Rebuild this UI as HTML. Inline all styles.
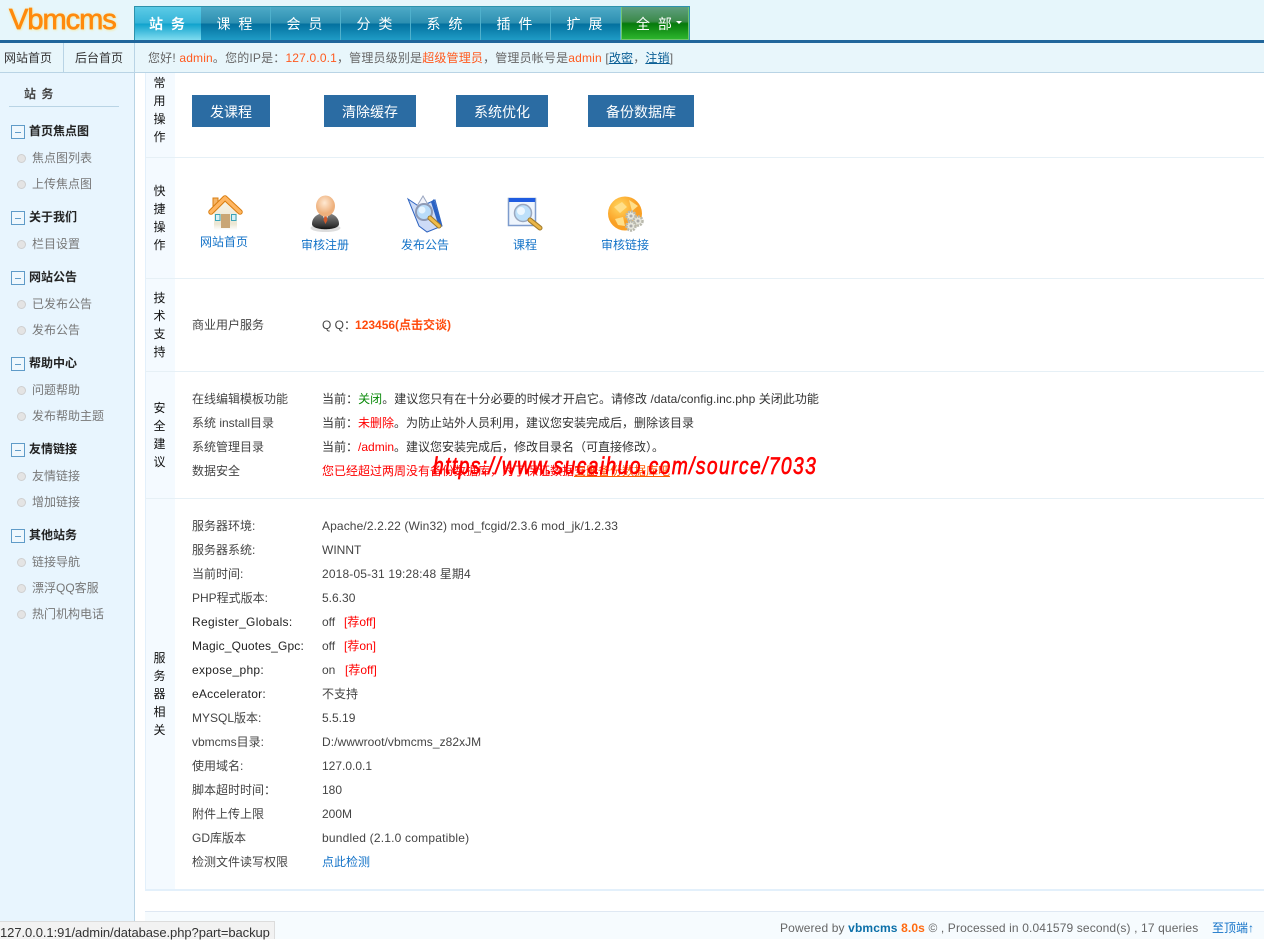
<!DOCTYPE html>
<html lang="zh"><head><meta charset="utf-8"><title>Vbmcms</title>
<style>
*{box-sizing:border-box}
html,body{margin:0;padding:0}
body{width:1264px;height:939px;overflow:hidden;position:relative;background:#fff;font:12px/18px "Liberation Sans","Noto Sans CJK SC",sans-serif;color:#444}
.a{position:absolute;white-space:nowrap}
.nav{position:absolute;top:7px;height:33px;width:70px;text-align:center;color:#fff;font-size:14px;line-height:34px;letter-spacing:2px;border-right:1px solid #4fb0cc;background:linear-gradient(#4eaac7 0,#2c8fb1 48%,#03719f 52%,#1f9cc6 100%)}
.s{position:absolute;left:32px;color:#777;white-space:nowrap}
.s:before{content:"";position:absolute;left:-15px;top:5px;width:7px;height:7px;border:1px solid #cfcfcf;border-radius:50%;background:#e4e4e4}
.h{position:absolute;left:29px;color:#222;font-weight:bold;white-space:nowrap}
.h:before{content:"";position:absolute;left:-18px;top:3px;width:12px;height:12px;border:1px solid #5f9bc8;background:linear-gradient(90deg,#5f9bc8,#5f9bc8) center/6px 1px no-repeat #eef7fd}
.b{position:absolute;top:95px;height:32px;background:#2b6ca3;color:#fff;font-size:14px;line-height:34px;text-align:center}
.v{position:absolute;left:153px;width:13px;text-align:center;color:#111;line-height:18px;white-space:normal}
.l{position:absolute;left:192px;white-space:nowrap}
.r{position:absolute;left:322px;white-space:nowrap}
.e{letter-spacing:.15px}
.sep{position:absolute;left:145px;right:0;height:1px;background:#e6f0f6}
.q{position:absolute;top:236px;width:70px;text-align:center;color:#1473c8}
</style></head><body>

<div class="a" style="left:0;top:0;width:1264px;height:40px;background:#e6f6fb"></div>
<div class="a" style="left:9px;top:2px;font:29px/36px 'Liberation Sans',sans-serif;color:#ff8a0c;letter-spacing:-1px;-webkit-text-stroke:.7px #ff8a0c;text-shadow:0 0 3px #f3e9a8,1px 1px 2px #f3e9a8">Vbmcms</div>
<div class="a" style="left:134px;top:6px;width:556px;height:34px;border:1px solid #2d92ac;border-bottom:0"></div>
<div class="nav" style="left:135px;width:66px;background:linear-gradient(#5ccbe6 0,#35b4d8 48%,#11a3cd 52%,#7fdcf0 100%);font-weight:bold;border:0">站 务</div>
<div class="nav" style="left:201px">课 程</div>
<div class="nav" style="left:271px">会 员</div>
<div class="nav" style="left:341px">分 类</div>
<div class="nav" style="left:411px">系 统</div>
<div class="nav" style="left:481px">插 件</div>
<div class="nav" style="left:551px">扩 展</div>
<div class="nav" style="left:621px;width:68px;border:1px solid #6fc56f;border-width:0 1px 1px 1px;background:linear-gradient(#5f9f7f 0,#3b8a4a 45%,#067a0c 52%,#2db52d 100%)">全 部</div>
<div class="a" style="left:676px;top:21px;width:0;height:0;border:3px solid transparent;border-top:3px solid #fff"></div>
<div class="a" style="left:0;top:40px;width:1264px;height:3px;background:#21669b"></div>

<div class="a" style="left:0;top:43px;width:1264px;height:30px;background:#e8f6fb;border-bottom:1px solid #b9d4e5"></div>
<div class="a" style="left:0;top:43px;width:64px;height:29px;border-right:1px solid #b9d4e5;padding-left:4px;line-height:31px;color:#333">网站首页</div>
<div class="a" style="left:64px;top:43px;width:71px;height:29px;border-right:1px solid #b9d4e5;text-align:center;line-height:31px;color:#333">后台首页</div>
<div class="a" style="left:148px;top:43px;line-height:31px;color:#666;letter-spacing:.17px">您好! <span style="color:#ff5a1f">admin</span>。您的IP是：<span style="color:#ff5a1f">127.0.0.1</span>，管理员级别是<span style="color:#ff5a1f">超级管理员</span>，管理员帐号是<span style="color:#ff5a1f">admin</span> [<span style="color:#0b5f95;text-decoration:underline">改密</span>，<span style="color:#0b5f95;text-decoration:underline">注销</span>]</div>

<div class="a" style="left:0;top:73px;width:135px;height:866px;background:#e8f5fe;border-right:1px solid #b9d4e5"></div>
<div class="a" style="left:24px;top:85px;font-weight:bold;color:#444;letter-spacing:1px">站 务</div>
<div class="a" style="left:9px;top:106px;width:110px;height:1px;background:#b9d4e5"></div>
<div class="h" style="top:122px">首页焦点图</div>
<div class="s" style="top:149px">焦点图列表</div>
<div class="s" style="top:175px">上传焦点图</div>
<div class="h" style="top:208px">关于我们</div>
<div class="s" style="top:235px">栏目设置</div>
<div class="h" style="top:268px">网站公告</div>
<div class="s" style="top:295px">已发布公告</div>
<div class="s" style="top:321px">发布公告</div>
<div class="h" style="top:354px">帮助中心</div>
<div class="s" style="top:381px">问题帮助</div>
<div class="s" style="top:407px">发布帮助主题</div>
<div class="h" style="top:440px">友情链接</div>
<div class="s" style="top:467px">友情链接</div>
<div class="s" style="top:493px">增加链接</div>
<div class="h" style="top:526px">其他站务</div>
<div class="s" style="top:553px">链接导航</div>
<div class="s" style="top:579px">漂浮QQ客服</div>
<div class="s" style="top:605px">热门机构电话</div>

<div class="a" style="left:145px;top:73px;width:30px;height:816px;background:#f4faff"></div>
<div class="a" style="left:145px;top:73px;width:1px;height:816px;background:#e3f0fb"></div>
<div class="sep" style="top:157px"></div>
<div class="sep" style="top:278px"></div>
<div class="sep" style="top:371px"></div>
<div class="sep" style="top:498px"></div>
<div class="a" style="left:145px;top:889px;width:1119px;height:2px;background:#e3f0fb"></div>

<div class="v" style="top:74px">常<br>用<br>操<br>作</div>
<div class="b" style="left:192px;width:78px">发课程</div>
<div class="b" style="left:324px;width:92px">清除缓存</div>
<div class="b" style="left:456px;width:92px">系统优化</div>
<div class="b" style="left:588px;width:106px">备份数据库</div>

<div class="v" style="top:182px">快<br>捷<br>操<br>作</div>

<svg class="a" style="left:206px;top:193px" width="40" height="40" viewBox="0 0 40 40">
<defs><linearGradient id="w" x1="0" y1="0" x2="0" y2="1"><stop offset="0" stop-color="#f7f3e6"/><stop offset=".8" stop-color="#ece7d4"/><stop offset="1" stop-color="#fff"/></linearGradient></defs>
<path d="M8 17 19 7 31 17V37H8Z" fill="url(#w)"/>
<rect x="15" y="21" width="9" height="14" fill="#c9a675"/>
<rect x="9.500" y="21.500" width="4.500" height="6" fill="#d8f0f6" stroke="#3aa4b8"/>
<rect x="25.500" y="21.500" width="4.500" height="6" fill="#d8f0f6" stroke="#3aa4b8"/>
<path d="M7 5H12V9L7 14Z" fill="#f6b567" stroke="#d97e10"/>
<path d="M5 19 19 5 34 19" fill="none" stroke="#d97e10" stroke-width="5.500" stroke-linecap="round" stroke-linejoin="round"/>
<path d="M5 19 19 5 34 19" fill="none" stroke="#ffb662" stroke-width="3.500" stroke-linecap="round" stroke-linejoin="round"/>
</svg>
<div class="q" style="left:189px;top:233px">网站首页</div>

<svg class="a" style="left:308px;top:195px" width="34" height="38" viewBox="0 0 34 38">
<defs><radialGradient id="f" cx=".45" cy=".35"><stop offset="0" stop-color="#ffe9d2"/><stop offset="1" stop-color="#eeb07c"/></radialGradient>
<linearGradient id="d" x1="0" y1="0" x2="0" y2="1"><stop offset="0" stop-color="#8a8a8a"/><stop offset=".8" stop-color="#333"/><stop offset="1" stop-color="#111"/></linearGradient></defs>
<ellipse cx="17.500" cy="33" rx="15" ry="4" fill="#ddd"/>
<path d="M4 29C4 22 10 18 17.500 18S31 22 31 29C31 36 4 36 4 29Z" fill="url(#d)"/>
<path d="M14 19H21L17.500 27Z" fill="#eee"/><path d="M16.500 21H18.500L19.500 25 17.500 29 15.500 25Z" fill="#d2582a"/>
<ellipse cx="17.500" cy="11" rx="9.500" ry="10.500" fill="url(#f)"/>
</svg>
<div class="q" style="left:290px">审核注册</div>

<svg class="a" style="left:403px;top:195px" width="42" height="40" viewBox="0 0 42 40">
<path d="M5 4 17 12 32 5 39 31 24 37 16 31Z" fill="#cddbf6" stroke="#2f64c0"/>
<path d="M31 4 39 31 36 32 28 7Z" fill="#2a62c4"/>
<path d="M14 11 20 1 27 13" fill="#f2f4fb" stroke="#9aa6c0"/>
<circle cx="21" cy="17" r="8" fill="#b9dcfa" stroke="#8e9ab5" stroke-width="2"/>
<circle cx="19" cy="15" r="3.500" fill="#e6f4ff"/>
<path d="M27 23 36 31" stroke="#a07a2a" stroke-width="5" stroke-linecap="round"/>
<path d="M27 23 36 31" stroke="#f0bc4a" stroke-width="3" stroke-linecap="round"/>
</svg>
<div class="q" style="left:390px">发布公告</div>

<svg class="a" style="left:503px;top:195px" width="42" height="38" viewBox="0 0 42 38">
<rect x="5.500" y="3.500" width="27" height="27" fill="#eef5fd" stroke="#7d9bcc" stroke-width="1.500"/>
<rect x="6" y="3" width="26" height="4" fill="#1f5ce0"/>
<circle cx="20" cy="18" r="8.500" fill="#bde0fa" stroke="#9aa8bf" stroke-width="1.500"/>
<circle cx="18" cy="16" r="4" fill="#ecf7ff"/>
<path d="M27 25 37 33" stroke="#a07a2a" stroke-width="5" stroke-linecap="round"/>
<path d="M27 25 37 33" stroke="#eab648" stroke-width="3" stroke-linecap="round"/>
</svg>
<div class="q" style="left:490px">课程</div>

<svg class="a" style="left:605px;top:195px" width="42" height="38" viewBox="0 0 42 38">
<defs><radialGradient id="g" cx=".35" cy=".3"><stop offset="0" stop-color="#ffd860"/><stop offset=".65" stop-color="#fdb238"/><stop offset="1" stop-color="#f9a024"/></radialGradient></defs>
<circle cx="20" cy="18.500" r="17" fill="url(#g)"/>
<path d="M9 12 17 7 22 12 15 18ZM24 5 33 11 27 16ZM10 24 18 22 20 31 13 30Z" fill="#ffdf8a"/>
<g fill="#e6e6dc" stroke="#b9b9ad" stroke-width="2.500" stroke-dasharray="2 1">
<circle cx="26" cy="21" r="4.500"/><circle cx="33" cy="26" r="4.500"/><circle cx="26" cy="31" r="4.500"/></g>
<circle cx="26" cy="21" r="1.500" fill="#aaa"/><circle cx="33" cy="26" r="1.500" fill="#aaa"/><circle cx="26" cy="31" r="1.500" fill="#aaa"/>
</svg>
<div class="q" style="left:590px">审核链接</div>

<div class="v" style="top:289px">技<br>术<br>支<br>持</div>
<div class="l" style="top:316px">商业用户服务</div>
<div class="r" style="top:316px">Q Q：<b style="color:#ff4a0c;margin-left:-1px">123456(点击交谈)</b></div>

<div class="v" style="top:399px">安<br>全<br>建<br>议</div>
<div class="l" style="top:390px">在线编辑模板功能</div>
<div class="r" style="top:390px;color:#333;letter-spacing:.04px">当前：<span style="color:#0a8a0a">关闭</span>。建议您只有在十分必要的时候才开启它。请修改 /data/config.inc.php 关闭此功能</div>
<div class="l" style="top:414px">系统 install目录</div>
<div class="r" style="top:414px;color:#333">当前：<span style="color:#f00">未删除</span>。为防止站外人员利用，建议您安装完成后，删除该目录</div>
<div class="l" style="top:438px">系统管理目录</div>
<div class="r" style="top:438px;color:#333">当前：<span style="color:#f00">/admin</span>。建议您安装完成后，修改目录名（可直接修改）。</div>
<div class="l" style="top:462px">数据安全</div>
<div class="r" style="top:462px;color:#f00">您已经超过两周没有备份数据库，为了保证数据安全，<span style="position:absolute;left:252px;top:0;color:#ff5a00;text-decoration:underline">立即备份数据库吧</span></div>
<div class="a" style="left:433px;top:452px;font:italic 24px/30px 'Liberation Sans',sans-serif;letter-spacing:1.78px;color:#f00;transform-origin:0 50%;transform:scaleX(.8);-webkit-text-stroke:.7px #f00">https://www.sucaihuo.com/source/7033</div>

<div class="v" style="top:649px">服<br>务<br>器<br>相<br>关</div>
<div class="l" style="top:517px">服务器环境:</div><div class="r e" style="top:517px;letter-spacing:.115px">Apache/2.2.22 (Win32) mod_fcgid/2.3.6 mod_jk/1.2.33</div>
<div class="l" style="top:541px">服务器系统:</div><div class="r" style="top:541px">WINNT</div>
<div class="l" style="top:565px">当前时间:</div><div class="r e" style="top:565px">2018-05-31 19:28:48 星期4</div>
<div class="l" style="top:589px">PHP程式版本:</div><div class="r" style="top:589px">5.6.30</div>
<div class="l" style="top:613px;color:#222;letter-spacing:.3px">Register_Globals:</div><div class="r" style="top:613px">off</div><div class="a" style="left:344px;top:613px;color:#f00">[荐off]</div>
<div class="l" style="top:637px;color:#222;letter-spacing:.15px">Magic_Quotes_Gpc:</div><div class="r" style="top:637px">off</div><div class="a" style="left:344px;top:637px;color:#f00">[荐on]</div>
<div class="l" style="top:661px;color:#222;letter-spacing:.3px">expose_php:</div><div class="r" style="top:661px">on</div><div class="a" style="left:345px;top:661px;color:#f00">[荐off]</div>
<div class="l" style="top:685px;color:#222;letter-spacing:.25px">eAccelerator:</div><div class="r" style="top:685px">不支持</div>
<div class="l" style="top:709px">MYSQL版本:</div><div class="r" style="top:709px">5.5.19</div>
<div class="l" style="top:733px">vbmcms目录:</div><div class="r" style="top:733px;letter-spacing:.05px">D:/wwwroot/vbmcms_z82xJM</div>
<div class="l" style="top:757px">使用域名:</div><div class="r" style="top:757px">127.0.0.1</div>
<div class="l" style="top:781px">脚本超时时间：</div><div class="r" style="top:781px">180</div>
<div class="l" style="top:805px">附件上传上限</div><div class="r" style="top:805px">200M</div>
<div class="l" style="top:829px">GD库版本</div><div class="r" style="top:829px;letter-spacing:.2px">bundled (2.1.0 compatible)</div>
<div class="l" style="top:853px">检测文件读写权限</div><div class="r" style="top:853px;color:#1473c8">点此检测</div>

<div class="a" style="left:145px;top:911px;width:1119px;height:28px;background:#f6fbfe;border-top:1px solid #dfe8f3"></div>
<div class="a" style="left:780px;top:919px;color:#666;letter-spacing:.13px">Powered by <b style="color:#0b6fa8">vbmcms</b> <b style="color:#ff6a10">8.0s</b> © , Processed in 0.041579 second(s) , 17 queries</div>
<div class="a" style="left:1212px;top:919px;color:#1473c8">至顶端↑</div>

<div class="a" style="left:0;top:921px;width:275px;height:18px;background:#f2f2f2;border:1px solid #dcdcdc;border-width:1px 1px 0 0;color:#333;font-size:13px;line-height:21px;letter-spacing:-.07px">127.0.0.1:91/admin/database.php?part=backup</div>
</body></html>
